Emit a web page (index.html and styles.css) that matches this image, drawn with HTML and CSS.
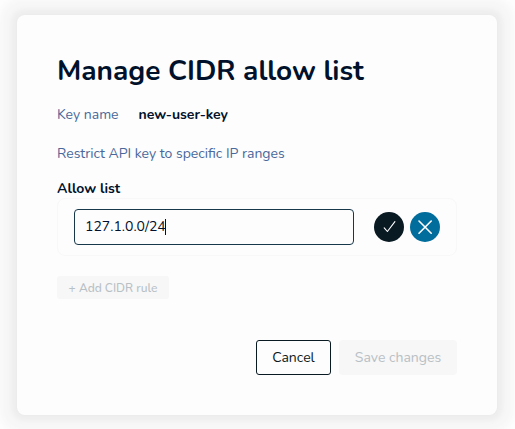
FILE: index.html
```html
<!DOCTYPE html>
<html lang="en">
<head>
<meta charset="utf-8">
<title>Manage CIDR allow list</title>
<link rel="stylesheet" href="styles.css">
</head>
<body>
<main class="dialog">
  <h1>Manage CIDR allow list</h1>
  <div class="key-row"><span class="key">Key name</span><strong>new-user-key</strong></div>
  <p class="hint">Restrict API key to specific IP ranges</p>
  <div class="label">Allow list</div>
  <section class="rule">
    <div class="field"><span>127.1.0.0/24</span><i class="caret"></i></div>
    <button class="round confirm" aria-label="Confirm"><svg width="30" height="30" viewBox="0 0 30 30"><path d="M10.2 15.8l3.2 3.7L20.9 9.7"/></svg></button>
    <button class="round discard" aria-label="Discard"><svg width="30" height="30" viewBox="0 0 30 30"><path d="M9 9l12.2 12.2M21.2 9L9 21.2"/></svg></button>
  </section>
  <button class="add" disabled>+ Add CIDR rule</button>
  <footer class="actions">
    <button class="cancel">Cancel</button>
    <button class="save" disabled>Save changes</button>
  </footer>
</main>
</body>
</html>
```
FILE: styles.css
```css
* { box-sizing: border-box; }
body {
  margin: 0;
  height: 429px;
  padding: 15px 18px 14px 17px;
  overflow: hidden;
  background: #fdfdfd;
  font-family: Nunito, Lato, "Open Sans", sans-serif;
  font-size: 14px;
  line-height: 20px;
  color: #00112b;
}
.dialog {
  height: 400px;
  padding: 40px;
  border-radius: 8px;
  background: #fdfdfd;
  box-shadow: 0 0 0 1px #ececec, 0 0 5px 6px #eeeeee, 0 0 6px 17px #f7f7f7;
}
h1 { margin: 0; height: 32px; font-size: 28px; line-height: 32px; font-weight: 700; white-space: nowrap; }
.key-row { display: flex; height: 20px; margin-top: 18px; }
.key { width: 81.5px; color: #49689b; }
strong { font-weight: 700; }
.hint { margin: 19px 0 0; height: 20px; color: #49689b; }
.label { margin-top: 15px; height: 19px; font-weight: 700; }
.rule {
  display: flex;
  align-items: center;
  width: 400px;
  height: 58px;
  padding: 0 15px 0 16px;
  border: 1px solid #f8f8f8;
  border-radius: 8px;
}
.field {
  display: flex;
  align-items: center;
  width: 280px;
  height: 36px;
  padding-left: 10px;
  border: 1px solid #17384a;
  border-radius: 4px;
  margin-right: 20px;
}
.caret { width: 1px; height: 16px; margin-left: -1px; background: #00112b; }
button { font: inherit; padding: 0; border: 0; white-space: nowrap; }
.round { width: 30px; height: 30px; border-radius: 50%; }
.round svg { display: block; fill: none; stroke: #fff; stroke-linecap: round; stroke-linejoin: round; }
.confirm { background: #091a23; margin-right: 6px; stroke-width: 1.1; }
.discard { background: #006d9d; stroke-width: 1.6; }
.add {
  display: block;
  width: 112px;
  height: 23px;
  margin-top: 20px;
  border-radius: 3px;
  background: #f7f7f7;
  color: #b7c0c5;
  font-size: 12px;
  font-weight: 500;
}
.actions { display: flex; justify-content: flex-end; gap: 8px; margin-top: 41px; }
.cancel { width: 75px; height: 35px; border: 1px solid #091a23; border-radius: 3px; background: #fdfdfd; color: #091a23; }
.save { width: 118px; height: 35px; border-radius: 4px; background: #f7f7f7; color: #b7c0c5; }
```
